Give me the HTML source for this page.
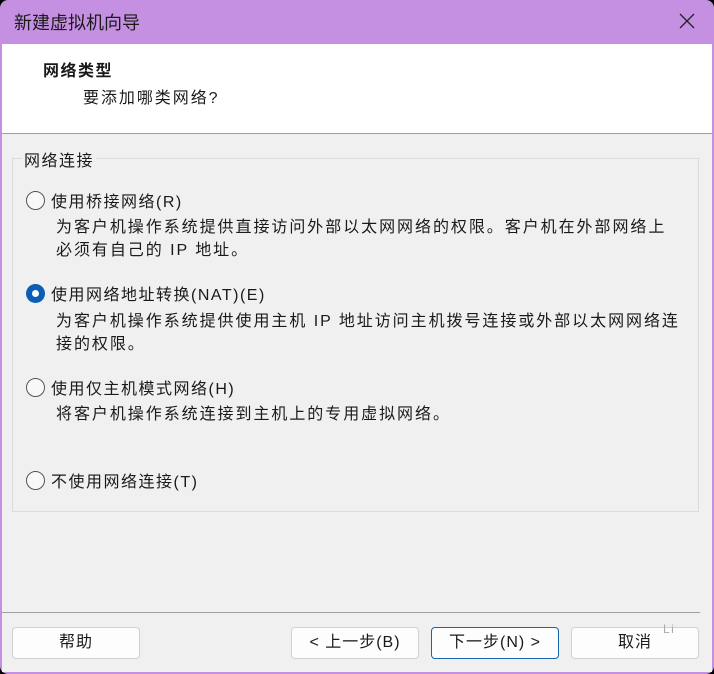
<!DOCTYPE html>
<html><head><meta charset="utf-8"><style>
*{margin:0;padding:0;box-sizing:border-box}
body{width:714px;height:674px;background:#000;font-family:"Liberation Sans","Noto Sans CJK SC",sans-serif;overflow:hidden}
.win{position:absolute;left:0;top:0;width:714px;height:674px;background:#c690e2;border-radius:8px;}
.title{position:absolute;left:14px;top:9px;font-size:18px;color:#1a1a1a}
.close{position:absolute;left:678px;top:12px}
.client{position:absolute;left:2px;top:44px;width:710px;height:628px;background:#f0f0f0}
.head{position:absolute;left:0;top:0;width:710px;height:90px;background:#fff;border-bottom:1px solid #a0a0a0}
.t{position:absolute;font-size:16px;color:#1a1a1a;white-space:nowrap;letter-spacing:1.5px}
.d{letter-spacing:1.95px}
.gb{position:absolute;left:10px;top:114px;width:687px;height:354px;border:1px solid #dcdcdc}
.radio{position:absolute;width:19px;height:19px;border:1.5px solid #555;border-radius:50%;background:#f8f8f8}
.radio.on{border:none;background:#0a5fb4}
.radio.on:after{content:"";position:absolute;left:6px;top:6px;width:7px;height:7px;border-radius:50%;background:#fff}
.sep{position:absolute;left:0;top:568px;width:698px;height:1px;background:#a0a0a0}
.btn{position:absolute;top:583px;width:128px;height:32px;border:1px solid #d0d0d0;border-radius:4px;background:#fdfdfd;font-size:16px;color:#1a1a1a;text-align:center;line-height:30px;letter-spacing:1px}
</style></head><body>
<div class="win">
<div class="title">新建虚拟机向导</div>
<svg class="close" width="18" height="18" viewBox="0 0 18 18"><path d="M2 2L16 16M16 2L2 16" stroke="#222" stroke-width="1.3"/></svg>
<div class="client">
<div class="head">
<div class="t" style="left:41px;top:13px;font-weight:bold">网络类型</div>
<div class="t d" style="left:81px;top:40px">要添加哪类网络?</div>
</div>
<div class="gb"></div>
<div class="t" style="left:20px;top:103px;background:#f0f0f0;padding:0 2px">网络连接</div>
<div class="radio" style="left:24px;top:147px"></div>
<div class="t" style="left:49px;top:144px">使用桥接网络(R)</div>
<div class="t d" style="left:54px;top:169px">为客户机操作系统提供直接访问外部以太网网络的权限。客户机在外部网络上</div>
<div class="t d" style="left:54px;top:192px">必须有自己的 IP 地址。</div>
<div class="radio on" style="left:24px;top:240px"></div>
<div class="t" style="left:49px;top:237px">使用网络地址转换(NAT)(E)</div>
<div class="t d" style="left:54px;top:263px">为客户机操作系统提供使用主机 IP 地址访问主机拨号连接或外部以太网网络连</div>
<div class="t d" style="left:54px;top:286px">接的权限。</div>
<div class="radio" style="left:24px;top:334px"></div>
<div class="t" style="left:49px;top:331px">使用仅主机模式网络(H)</div>
<div class="t d" style="left:54px;top:356px">将客户机操作系统连接到主机上的专用虚拟网络。</div>
<div class="radio" style="left:24px;top:427px"></div>
<div class="t" style="left:49px;top:424px">不使用网络连接(T)</div>
<div class="sep"></div>
<div class="btn" style="left:10px">帮助</div>
<div class="btn" style="left:289px">&lt; 上一步(B)</div>
<div class="btn" style="left:429px;border-color:#1565b0">下一步(N) &gt;</div>
<div class="btn" style="left:569px">取消</div>
<div class="t" style="left:661px;top:578px;font-size:12px;color:#aaa">Li</div>
</div>
</div>
</body></html>
